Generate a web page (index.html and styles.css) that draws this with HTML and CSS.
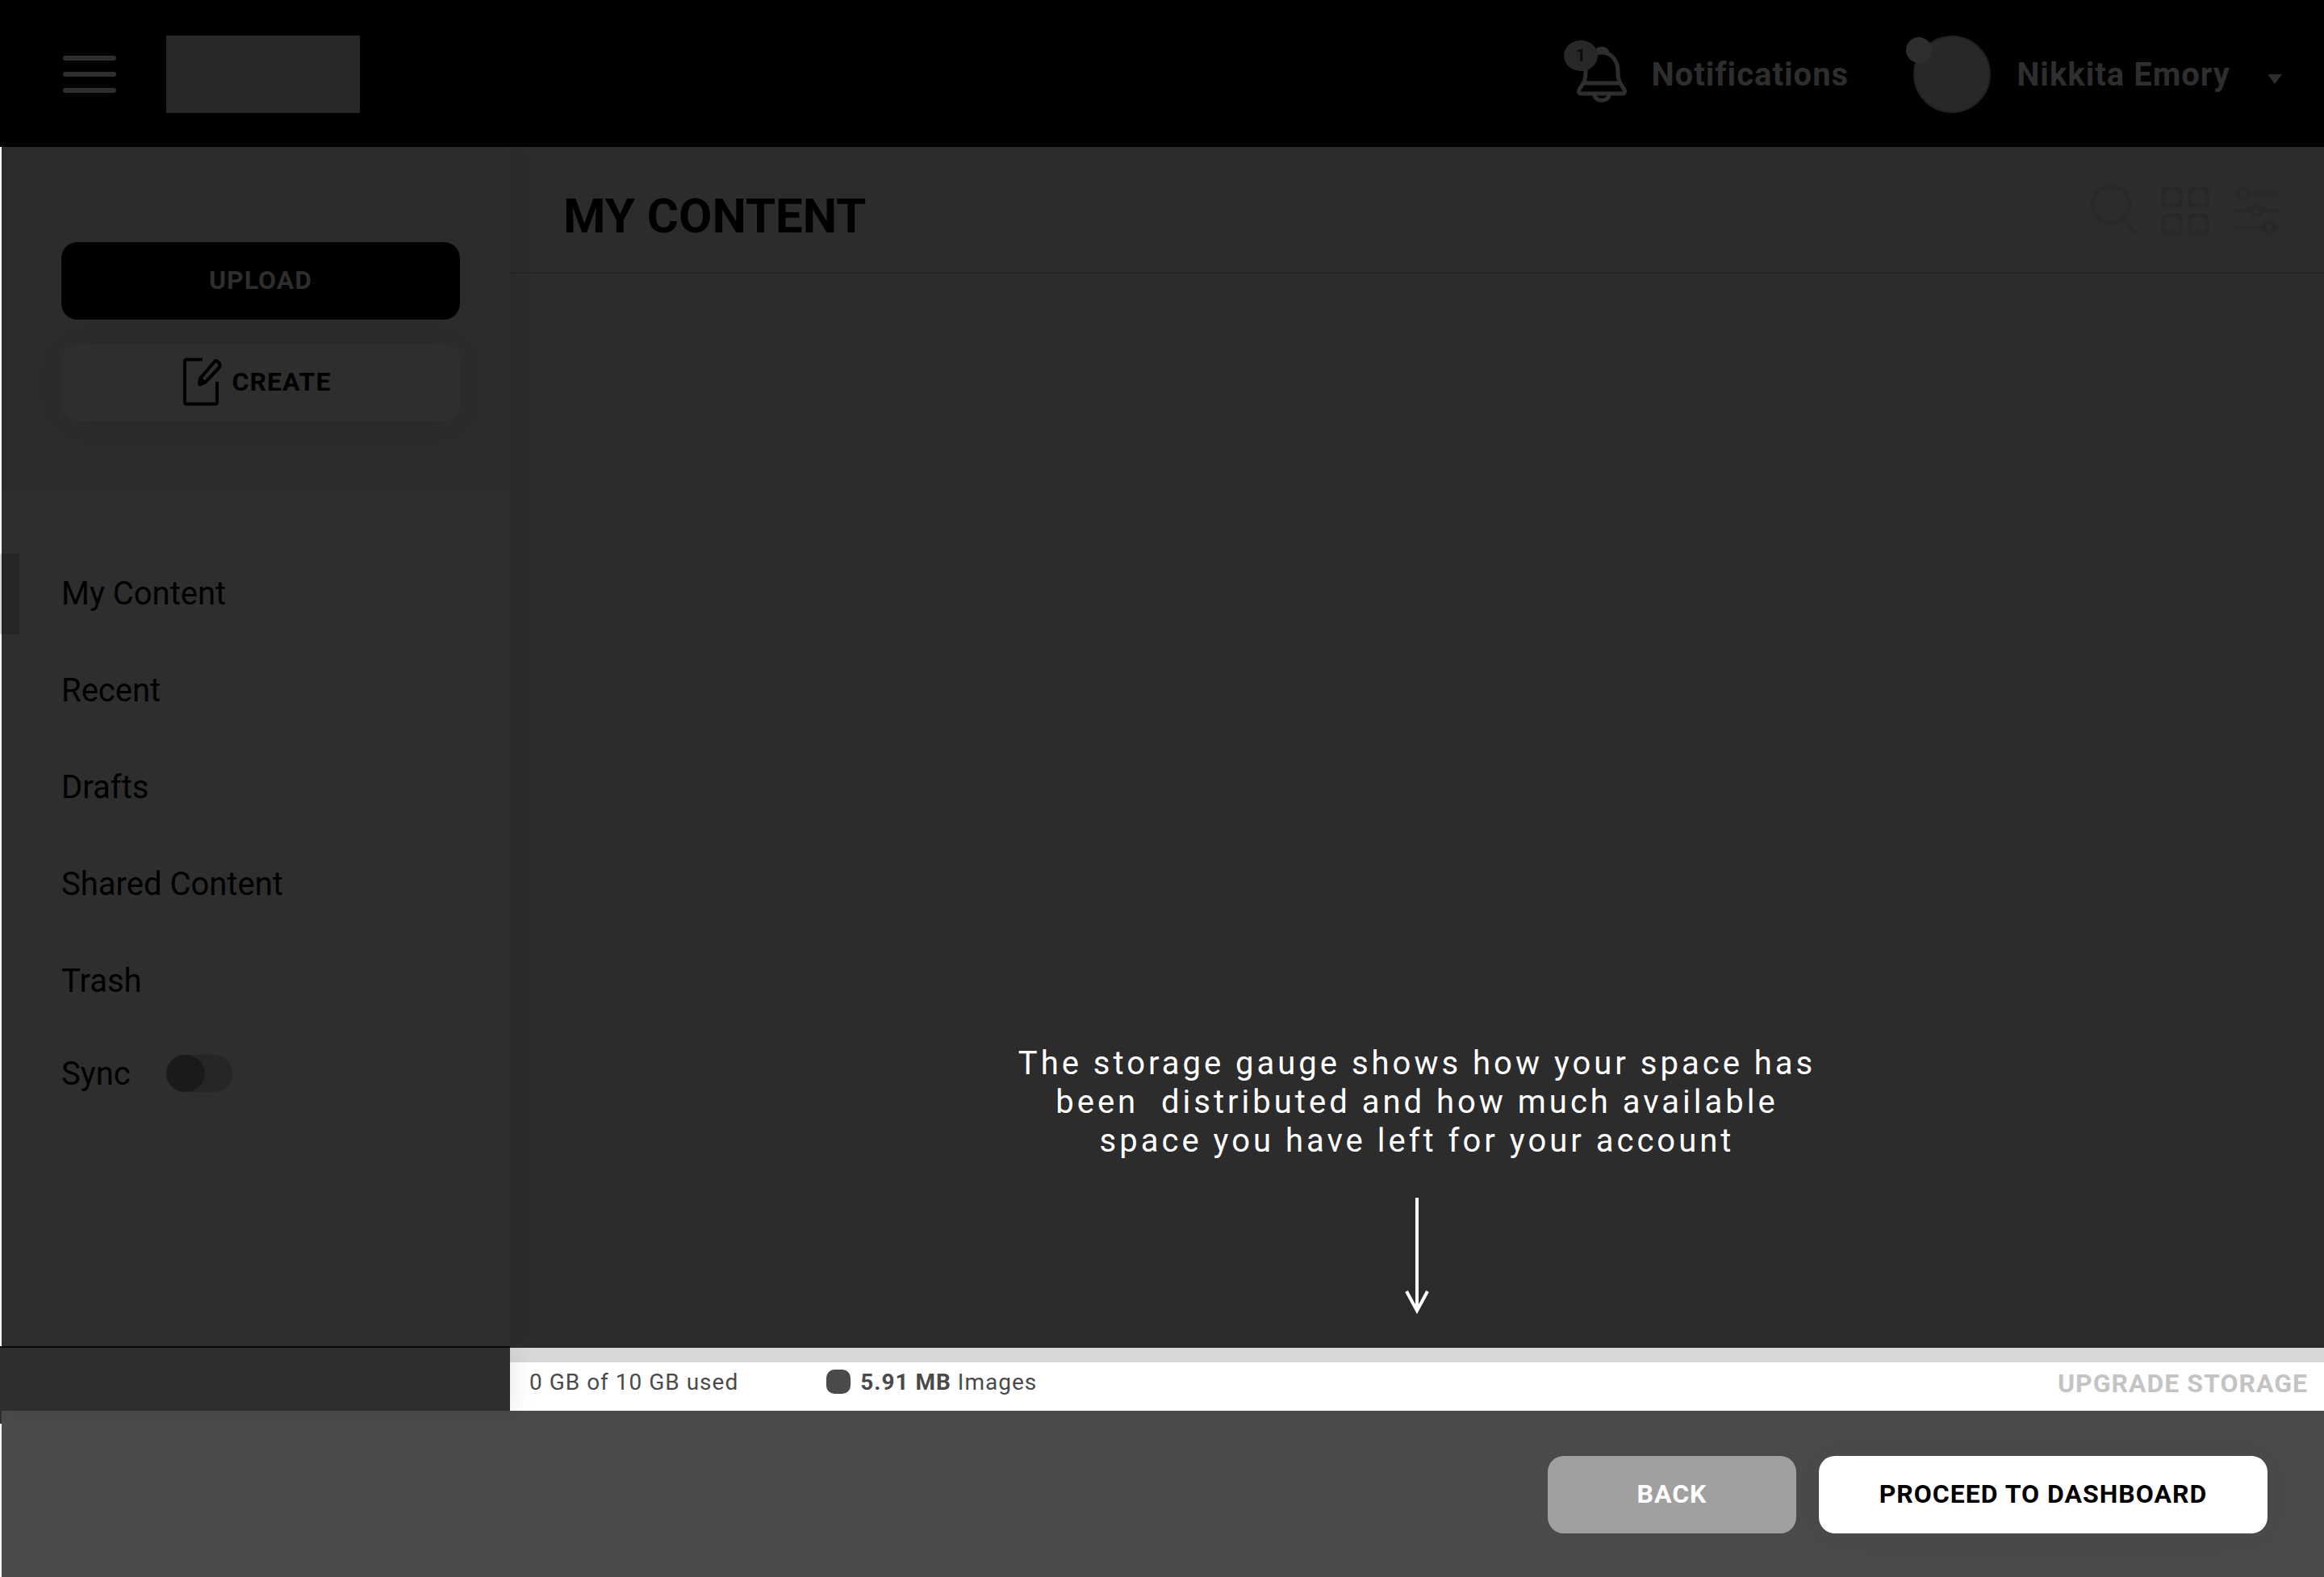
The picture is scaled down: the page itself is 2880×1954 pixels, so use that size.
FILE: index.html
```html
<!DOCTYPE html>
<html lang="en">
<head>
<meta charset="utf-8">
<meta name="viewport" content="width=device-width, initial-scale=1">
<title>My Content</title>
<link rel="stylesheet" href="styles.css">
</head>
<body>
<header class="topbar">
  <button class="menu" type="button" aria-label="Menu"><span></span><span></span><span></span></button>
  <div class="logo"></div>
  <button class="notifications" type="button">
    <span class="bell">
      <svg width="62" height="74" viewBox="0 0 62 74" fill="none" stroke="currentColor" stroke-width="5" stroke-linejoin="round" aria-hidden="true">
        <path d="M24 10a7.500 7.500 0 0 1 14 0"/>
        <path d="M11 34C11 20 19 10 31 10S51 20 51 34C51 44 53 47 57 53C61 58 60 61 56 61H6C2 61 1 58 5 53C9 47 11 44 11 34M9 48H53"/>
        <path d="M22 62a9 7.500 0 0 0 18 0"/>
      </svg>
      <span class="badge">1</span>
    </span>
    <span>Notifications</span>
  </button>
  <button class="account" type="button">
    <span class="avatar"></span>
    <span>Nikkita Emory</span>
    <span class="caret"></span>
  </button>
</header>

<div class="workspace">
  <aside class="sidebar">
    <div class="actions">
      <button class="btn btn-upload" type="button">UPLOAD</button>
      <button class="btn btn-create" type="button">
        <svg width="50" height="60" viewBox="0 0 50 60" fill="none" stroke="currentColor" stroke-width="4" stroke-linejoin="round" aria-hidden="true">
          <path d="M25 2.500H5Q3 2.500 3 5V55Q3 57.500 5 57.500H41Q43 57.500 43 55V30"/>
          <path d="M42 4Q48 7 46 12L28 31L22 26L40 5Q41 3 42 4Z"/>
          <path d="M21 24L30 31Q25 36 20 35Q18 31 21 24Z" fill="currentColor" stroke="none"/>
        </svg>
        CREATE
      </button>
    </div>
    <nav class="nav">
      <a class="active" href="#content">My Content</a>
      <a href="#recent">Recent</a>
      <a href="#drafts">Drafts</a>
      <a href="#shared">Shared Content</a>
      <a href="#trash">Trash</a>
      <div class="sync">
        <label for="sync">Sync</label>
        <input id="sync" type="checkbox" role="switch">
      </div>
    </nav>
  </aside>

  <main class="content">
    <div class="content-head">
      <h1>MY CONTENT</h1>
      <div class="tools">
        <button type="button" aria-label="Search">
          <svg width="60" height="66" viewBox="0 0 60 66" fill="none" stroke="currentColor" stroke-width="5" stroke-linecap="round"><circle cx="26" cy="27" r="23"/><path d="M42 46L56 61"/></svg>
        </button>
        <button type="button" aria-label="Grid view">
          <svg width="60" height="66" viewBox="0 0 60 66" fill="none" stroke="currentColor" stroke-width="5"><rect x="3" y="7" width="21" height="21" rx="3"/><rect x="36" y="7" width="21" height="21" rx="3"/><rect x="3" y="40" width="21" height="21" rx="3"/><rect x="36" y="40" width="21" height="21" rx="3"/></svg>
        </button>
        <button type="button" aria-label="Filters">
          <svg width="60" height="66" viewBox="0 0 60 66" fill="none" stroke="currentColor" stroke-width="5" stroke-linecap="round"><path d="M3 13H8M21 13H57M3 34H24M37 34H57M3 55H40M53 55H57"/><circle cx="14" cy="13" r="6"/><circle cx="30" cy="34" r="6"/><circle cx="46" cy="55" r="6"/></svg>
        </button>
      </div>
    </div>
    <div class="tour">
      <p>The storage gauge shows how your space has<br>been&nbsp; distributed and how much available<br>space you have left for your account</p>
      <svg width="30" height="144" viewBox="0 0 30 144" fill="none" stroke="currentColor" stroke-width="4" aria-hidden="true"><path d="M15 0V138M2 116L15 140L28 116"/></svg>
    </div>
  </main>
</div>

<div class="storage-row">
  <div class="side-foot"></div>
  <section class="storage">
    <div class="gauge"></div>
    <div class="legend">
      <span>0 GB of 10 GB used</span>
      <span class="kind"><i class="swatch"></i><span><b>5.91 MB</b> Images</span></span>
      <a class="upgrade" href="#upgrade">UPGRADE STORAGE</a>
    </div>
  </section>
</div>

<footer class="steps">
  <button class="btn btn-back" type="button">BACK</button>
  <button class="btn btn-next" type="button">PROCEED TO DASHBOARD</button>
</footer>
</body>
</html>
```
FILE: styles.css
```css
* {
  box-sizing: border-box;
}

body {
  margin: 0;
  min-height: 100vh;
  display: flex;
  flex-direction: column;
  background: #fff;
  color: #000;
  font-family: Roboto, "Liberation Sans", sans-serif;
  font-size: 40px;
}

button {
  border: 0;
  padding: 0;
  background: none;
  color: inherit;
  font: inherit;
}

a {
  color: inherit;
  text-decoration: none;
}

svg {
  display: block;
  flex: none;
}

/* top bar */
.topbar {
  height: 182px;
  padding: 2px 52px 0 78px;
  display: flex;
  align-items: center;
  background: #000;
  color: #2e2e2e;
}

.menu {
  width: 66px;
  display: grid;
  gap: 14px;
}

.menu span {
  height: 6px;
  border-radius: 3px;
  background: currentColor;
}

.logo {
  width: 240px;
  height: 96px;
  margin-left: 62px;
  background: #282828;
}

.notifications,
.account {
  display: flex;
  align-items: center;
  font-weight: 700;
  letter-spacing: 1px;
}

.notifications {
  margin-left: auto;
  gap: 30px;
}

.bell {
  position: relative;
}

.badge {
  position: absolute;
  top: -5px;
  left: -16px;
  width: 42px;
  height: 38px;
  border-radius: 50%;
  background: #282828;
  color: #0c0c0c;
  font-size: 22px;
  line-height: 38px;
  text-align: center;
}

.account {
  margin-left: 80px;
}

.avatar {
  position: relative;
  width: 96px;
  height: 96px;
  margin-right: 32px;
  border: 2px solid #202020;
  border-radius: 50%;
  background: #282828;
}

.avatar::before {
  content: "";
  position: absolute;
  top: 0;
  left: -11px;
  width: 32px;
  height: 32px;
  border-radius: 50%;
  background: #2e2e2e;
}

.caret {
  margin: 12px 0 0 46px;
  border: 9px solid transparent;
  border-top: 12px solid currentColor;
  border-bottom: 0;
}

/* sidebar and main area */
.workspace {
  flex: 1;
  padding-left: 2px;
  display: grid;
  grid-template-columns: 630px minmax(0, 1fr);
}

.sidebar {
  position: relative;
  background: #2e2e2e;
  box-shadow: 10px 0 20px rgba(0, 0, 0, 0.06);
  clip-path: inset(0 -40px 0 -2px);
}

.actions {
  height: 428px;
  padding: 118px 62px 0 74px;
  display: flex;
  flex-direction: column;
  gap: 30px;
  background: #2c2c2c;
}

.btn {
  height: 96px;
  padding-bottom: 2px;
  flex: none;
  display: flex;
  align-items: center;
  justify-content: center;
  border-radius: 20px;
  font-size: 32px;
  font-weight: 700;
  letter-spacing: 1px;
}

.btn-upload {
  background: #000;
  color: #2e2e2e;
}

.btn-create {
  padding-right: 10px;
  gap: 12px;
  background: #2e2e2e;
  box-shadow: 0 2px 40px rgba(0, 0, 0, 0.06);
}

.nav {
  padding-top: 66px;
  display: flex;
  flex-direction: column;
}

.nav a {
  position: relative;
  padding-left: 74px;
  line-height: 120px;
}

.nav .active::before {
  content: "";
  position: absolute;
  top: 10px;
  left: 0;
  width: 22px;
  height: 100px;
  background: #262626;
  box-shadow: -2px 0 #d8d8d8;
  clip-path: inset(0 0 0 -2px);
}

.sync {
  height: 108px;
  padding-left: 74px;
  display: flex;
  align-items: center;
  gap: 44px;
}

.sync input {
  appearance: none;
  width: 82px;
  height: 46px;
  margin: 0;
  border-radius: 23px;
  background: #262626;
}

.sync input::before {
  content: "";
  display: block;
  width: 48px;
  height: 46px;
  border-radius: 50%;
  background: #1a1a1a;
}

.content {
  display: flex;
  flex-direction: column;
  background: #2c2c2c;
}

.content-head {
  height: 157px;
  padding: 0 54px 0 66px;
  display: flex;
  align-items: center;
  justify-content: space-between;
  border-bottom: 2px solid #272727;
}

h1 {
  margin: 16px 0 0;
  font-size: 60px;
  line-height: 72px;
  font-weight: 700;
}

.tools {
  display: flex;
  gap: 28px;
  color: #282828;
}

.tour {
  margin-top: auto;
  padding-bottom: 40px;
  display: flex;
  flex-direction: column;
  align-items: center;
  gap: 46px;
  color: #fff;
}

.tour p {
  margin: 0;
  line-height: 48px;
  letter-spacing: 4px;
  text-align: center;
}

/* storage strip */
.storage-row {
  height: 80px;
  display: grid;
  grid-template-columns: 632px minmax(0, 1fr);
  background: #2c2c2c;
}

.side-foot {
  position: relative;
  border-top: 2px solid #080808;
  background: #2e2e2e;
  box-shadow: 10px 0 20px rgba(0, 0, 0, 0.06);
  clip-path: inset(0 -40px -16px 0);
}

/* the strip's edge runs down past the footer's top */
.side-foot::after {
  content: "";
  position: absolute;
  top: 78px;
  left: 0;
  width: 2px;
  height: 16px;
  background: #2e2e2e;
}

.storage {
  margin-top: 2px;
  background: #fff;
}

.gauge {
  height: 18px;
  background: #d8d8d8;
}

.legend {
  height: 60px;
  padding: 0 20px 12px 24px;
  display: flex;
  align-items: center;
  color: #4a4a4a;
  font-size: 28px;
  letter-spacing: 1px;
}

.kind {
  margin-left: 109px;
  display: flex;
  align-items: center;
  gap: 12px;
}

.swatch {
  width: 30px;
  height: 30px;
  border-radius: 10px;
  background: #4a4a4a;
}

.upgrade {
  margin-left: auto;
  padding-top: 4px;
  color: #c4c4c4;
  font-size: 32px;
  font-weight: 700;
}

/* tour steps */
.steps {
  height: 206px;
  margin-left: 2px;
  padding: 56px 70px 0;
  display: flex;
  justify-content: flex-end;
  gap: 28px;
  background: #4a4a4a;
}

.btn-back {
  width: 308px;
  background: #a0a0a0;
  color: #fff;
}

.btn-next {
  width: 556px;
  background: #fff;
  box-shadow: 0 2px 40px rgba(0, 0, 0, 0.04);
}
```
